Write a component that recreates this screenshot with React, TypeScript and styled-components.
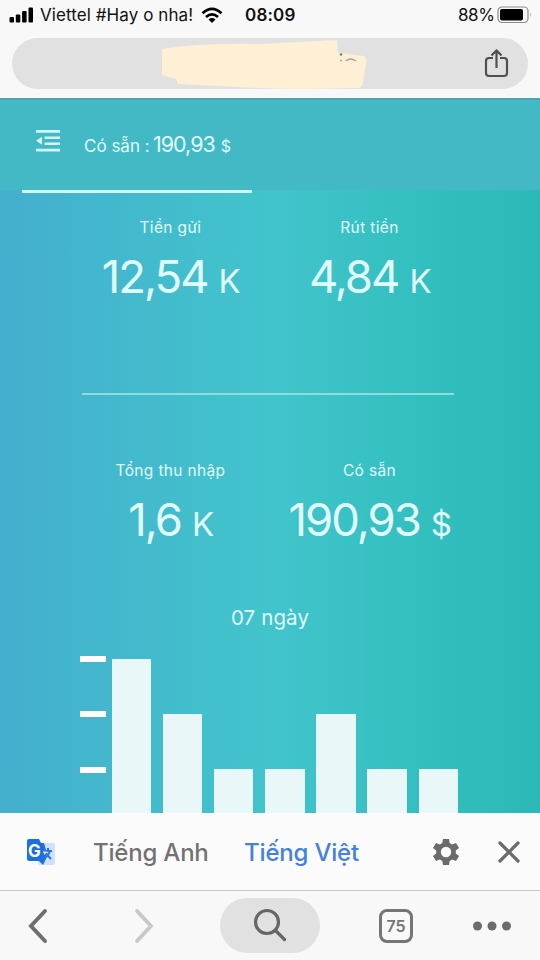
import styled, { createGlobalStyle } from "styled-components"

const GlobalStyle = createGlobalStyle`
  * {
    box-sizing: border-box;
  }

  body {
    margin: 0;
    font-family: Inter, "Noto Sans", sans-serif;
    background: #f8f8f9;
  }
`

const Screen = styled.div`
  display: flex;
  flex-direction: column;
  width: 540px;
  height: 960px;
  overflow: hidden;
`

const BrowserTop = styled.header`
  flex: 0 0 98px;
  background: #f8f8f9;
`

const StatusBar = styled.div`
  display: flex;
  align-items: center;
  height: 30px;
  padding: 0 9px;
  color: #111;
`

const StatusText = styled.span<{ $width: number; $spacing?: number; $bold?: boolean }>`
  width: ${(p) => p.$width}px;
  font-size: 17px;
  font-weight: ${(p) => (p.$bold ? 600 : 400)};
  letter-spacing: ${(p) => p.$spacing ?? 0}px;
  line-height: 30px;
  white-space: nowrap;
`

const Signal = styled.svg`
  margin-right: 6px;
`

const Wifi = styled.svg`
  margin: 0 22px 0 5px;
`

const Charge = styled.div`
  display: flex;
  align-items: center;
  margin-left: auto;
  margin-right: -1px;
`

const AddressBar = styled.div`
  display: flex;
  align-items: center;
  justify-content: space-between;
  height: 51px;
  margin: 8px 12px 0;
  padding: 0 19px 0 148px;
  border-radius: 26px;
  background: #e1e1e2;
`

const Page = styled.main`
  flex: 0 0 715px;
  overflow: hidden;
  color: #e0fcff;
  background: linear-gradient(90deg, #44afce 0%, #42c4cc 50%, #33bfbf 78%, #2bb8b6 100%);
`

const Navbar = styled.div`
  height: 92px;
  padding: 0 22px;
  border-top: 2px solid #4aa5ac;
  background: #43b9c5;
`

const NavContent = styled.div`
  display: flex;
  height: 90px;
  padding: 30px 0 0 13px;
`

const Balance = styled.div`
  display: flex;
  align-items: baseline;
  margin-left: 23px;
  font-size: 17px;
  line-height: 28px;
  white-space: nowrap;
`

const BalanceLabel = styled.span`
  width: 69px;
`

const BalanceAmount = styled.span`
  font-size: 21.5px;
  letter-spacing: -1px;
`

const BalanceCurrency = styled.span`
  margin-left: 6px;
  font-size: 16px;
`

const NavLine = styled.div`
  width: 230px;
  height: 3px;
  margin: 0 0 25px 22px;
  background: #d5f6f8;
`

const Stats = styled.div`
  display: grid;
  grid-template-columns: 199px 199px;
  justify-content: center;
`

const Stat = styled.section`
  text-align: center;
  white-space: nowrap;
`

const StatLabel = styled.div`
  font-size: 15.5px;
  letter-spacing: 0.35px;
  line-height: 20px;
`

const StatValue = styled.div`
  margin-top: 14px;
  font-size: 45.5px;
  font-weight: 400;
  letter-spacing: -2px;
  line-height: 50px;
`

const Unit = styled.span`
  margin-left: 11px;
  font-size: 33px;
  letter-spacing: -1.5px;
`

const Divider = styled.div`
  width: 372px;
  height: 2px;
  margin: 87px auto 66px 82px;
  background: #8fdcdc;
`

const ChartTitle = styled.h2`
  margin: 57px 0 0;
  font-size: 20.5px;
  font-weight: 400;
  letter-spacing: 0.1px;
  line-height: 24px;
  text-align: center;
`

const Chart = styled.div`
  display: flex;
  height: 157px;
  margin-top: 26px;
  padding-left: 80px;
`

const Ticks = styled.div`
  display: flex;
  flex-direction: column;
  gap: 49.3px;
  width: 26px;
  margin-right: 5.5px;
`

const Tick = styled.div`
  flex: 0 0 6px;
  background: #fff;
`

const Bars = styled.div`
  display: flex;
  align-items: flex-end;
  gap: 11.7px;
`

const Bar = styled.div`
  width: 39.5px;
  background: #eaf7f8;
`

const TranslateBar = styled.div`
  display: flex;
  align-items: center;
  flex: 0 0 78px;
  padding: 0 19px 0 26px;
  border-bottom: 1px solid #c8c8c8;
  background: #fbfbfc;
`

const Language = styled.button<{ $active?: boolean }>`
  width: 115px;
  margin-left: 36px;
  padding: 2px 0 0;
  border: 0;
  background: none;
  color: ${(p) => (p.$active ? "#4280e3" : "#727272")};
  font-family: inherit;
  font-size: 24px;
  font-weight: 500;
  letter-spacing: -0.2px;
  line-height: 30px;
  text-align: center;
  white-space: nowrap;
`

const TranslateActions = styled.div`
  display: flex;
  align-items: center;
  gap: 37px;
  margin-left: auto;
`

const Toolbar = styled.nav`
  display: flex;
  align-items: center;
  flex: 1;
  padding: 0 28px 0 27px;
  background: #f8f8f8;
`

const Forward = styled.svg`
  margin-left: 84px;
`

const SearchButton = styled.div`
  display: flex;
  align-items: center;
  justify-content: center;
  width: 100px;
  height: 55px;
  margin: 0 59px 0 65px;
  border-radius: 28px;
  background: #e1e1e1;
`

const TabCount = styled.div`
  width: 34px;
  height: 34px;
  margin-right: 60px;
  border: 3px solid #757575;
  border-radius: 8px;
  color: #757575;
  font-size: 16px;
  font-weight: 600;
  line-height: 28px;
  text-align: center;
`

const topStats = [
  { label: "Tiền gửi", value: "12,54", unit: "K" },
  { label: "Rút tiền", value: "4,84", unit: "K" },
]

const bottomStats = [
  { label: "Tổng thu nhập", value: "1,6", unit: "K" },
  { label: "Có sẵn", value: "190,93", unit: "$" },
]

const bars = [154.5, 99, 44, 44, 99, 44, 44]

function StatRow({ items }: { items: typeof topStats }) {
  return (
    <Stats>
      {items.map((item) => (
        <Stat key={item.label}>
          <StatLabel>{item.label}</StatLabel>
          <StatValue>
            {item.value}
            <Unit>{item.unit}</Unit>
          </StatValue>
        </Stat>
      ))}
    </Stats>
  )
}

function TranslateIcon() {
  return (
    <svg width="31" height="28" viewBox="0 0 31 28">
      <rect x="12" y="5" width="17" height="22" rx="2" fill="#d2e1fb" />
      <path d="M3 1h10l2 4h3l2 7v9l-3 6-4-4H3q-2 0-2-2V3q0-2 2-2z" fill="#1d6fdc" />
      <path d="M17 13h9M22 10v3M24 13q-1 4-6 8M20 15q2 3 5 6" fill="none" stroke="#2c76db" strokeWidth="2" />
      <path d="M17 13.500h4l-2.500 3.500z" fill="#dce8fc" />
      <text x="2" y="19" fill="#fff" fontFamily="Inter, sans-serif" fontSize="17" fontWeight="700">G</text>
    </svg>
  )
}

export default function App() {
  return (
    <Screen>
      <GlobalStyle />
      <BrowserTop>
        <StatusBar>
          <Signal width="25" height="16" viewBox="0 0 25 16" fill="#000">
            <rect x="0.500" y="10" width="4.500" height="5.500" rx="1" />
            <rect x="6.800" y="7.500" width="4.500" height="8" rx="1" />
            <rect x="13.100" y="4" width="4.500" height="11.500" rx="1" />
            <rect x="19.500" y="0.500" width="4.500" height="15" rx="1" />
          </Signal>
          <StatusText $width={156} $spacing={0.08}>Viettel #Hay o nha!</StatusText>
          <Wifi width="22" height="17" viewBox="0 0 22 17" fill="none" stroke="#000" strokeWidth="2.800">
            <path d="M1.500 6.200Q11-2.400 20.500 6.200M5 10Q11 4.700 17 10" />
            <path d="M11 16l-3.500-3.600q3.500-2.800 7 0z" fill="#000" stroke="none" />
          </Wifi>
          <StatusText $width={52} $spacing={0.2} $bold>08:09</StatusText>
          <Charge>
            <StatusText $width={39} $spacing={-0.4}>88%</StatusText>
            <svg width="35" height="18" viewBox="0 0 35 18">
              <rect x="1" y="1" width="30" height="15.500" rx="4" fill="none" stroke="#8d8d8f" strokeWidth="1.200" />
              <rect x="3" y="3" width="23" height="11.500" rx="2" fill="#000" />
              <path d="M33 6.500v4.500q1.500-2.200 0-4.500z" fill="#999" />
            </svg>
          </Charge>
        </StatusBar>
        <AddressBar>
          <svg width="210" height="51" viewBox="0 0 210 51">
            <path
              d="M2 11Q40 5 100 6L177 2l1 13 26 3q3 1 2 8l-3 19q-1 5-6 5-80 2-120-1l-59-3-2-5-14-4z"
              fill="#ffefd5"
            />
            <circle cx="181" cy="16.500" r="1.200" fill="#777" />
            <circle cx="181" cy="22.500" r="1" fill="#aaa" />
            <path d="M186 23q4-4 10 0" fill="none" stroke="#a8a49c" strokeWidth="1.500" />
          </svg>
          <svg width="25" height="30" viewBox="0 0 25 30" fill="none" stroke="#505052" strokeWidth="2.200">
            <path d="M9 9H5q-3 0-3 3v12q0 3 3 3h15q3 0 3-3V12q0-3-3-3h-4M12.500 19V2M7.500 6.500l5-5 5 5" />
          </svg>
        </AddressBar>
      </BrowserTop>

      <Page>
        <Navbar>
          <NavContent>
            <svg width="26" height="22" viewBox="0 0 26 22" fill="#d5f6f8">
              <path d="M1 0h24v2.700H1zM9.500 6.500H25V9H9.500zM9.500 12.500H25V15H9.500zM1 18.800h24v2.700H1zM1 10.700l6-4v8z" />
            </svg>
            <Balance>
              <BalanceLabel>Có sẵn :</BalanceLabel>
              <BalanceAmount>190,93</BalanceAmount>
              <BalanceCurrency>$</BalanceCurrency>
            </Balance>
          </NavContent>
        </Navbar>
        <NavLine />
        <StatRow items={topStats} />
        <Divider />
        <StatRow items={bottomStats} />
        <ChartTitle>07 ngày</ChartTitle>
        <Chart>
          <Ticks>
            <Tick />
            <Tick />
            <Tick />
          </Ticks>
          <Bars>
            {bars.map((height, index) => (
              <Bar key={index} style={{ height }} />
            ))}
          </Bars>
        </Chart>
      </Page>

      <TranslateBar>
        <TranslateIcon />
        <Language>Tiếng Anh</Language>
        <Language $active>Tiếng Việt</Language>
        <TranslateActions>
          <svg width="28" height="28" viewBox="0 0 28 28">
            <path
              d="M11 1h6l.7 4 2.500 1.400 3.800-1.500 3 5.200-3.200 2.500v2.800l3.200 2.500-3 5.200-3.800-1.500-2.500 1.400-.7 4h-6l-.7-4-2.500-1.400L4 23.100l-3-5.200 3.200-2.500v-2.800L1 10.100l3-5.200 3.800 1.500L10.300 5z"
              fill="#6b6b6b"
            />
            <circle cx="14" cy="14" r="5.200" fill="#fbfbfc" />
          </svg>
          <svg width="24" height="24" viewBox="0 0 24 24" stroke="#6b6b6b" strokeWidth="3.300" strokeLinecap="round">
            <path d="M3 3l18 18M21 3L3 21" />
          </svg>
        </TranslateActions>
      </TranslateBar>

      <Toolbar>
        <svg width="22" height="36" viewBox="0 0 22 36" fill="none" stroke="#6f6f6f" strokeWidth="4" strokeLinecap="round">
          <path d="M18 3L4 18l14 15" />
        </svg>
        <Forward width="22" height="36" viewBox="0 0 22 36" fill="none" stroke="#c8c8c8" strokeWidth="3.800" strokeLinecap="round">
          <path d="M4 3l14 15L4 33" />
        </Forward>
        <SearchButton>
          <svg width="34" height="35" viewBox="0 0 34 35" fill="none" stroke="#666" strokeWidth="3.200" strokeLinecap="round">
            <circle cx="14" cy="14" r="11.500" />
            <path d="M22.500 22.500l9 9" />
          </svg>
        </SearchButton>
        <TabCount>75</TabCount>
        <svg width="38" height="10" viewBox="0 0 38 10" fill="#6b6b6b">
          <circle cx="4.500" cy="5" r="4.500" />
          <circle cx="19" cy="5" r="4.500" />
          <circle cx="33.500" cy="5" r="4.500" />
        </svg>
      </Toolbar>
    </Screen>
  )
}
